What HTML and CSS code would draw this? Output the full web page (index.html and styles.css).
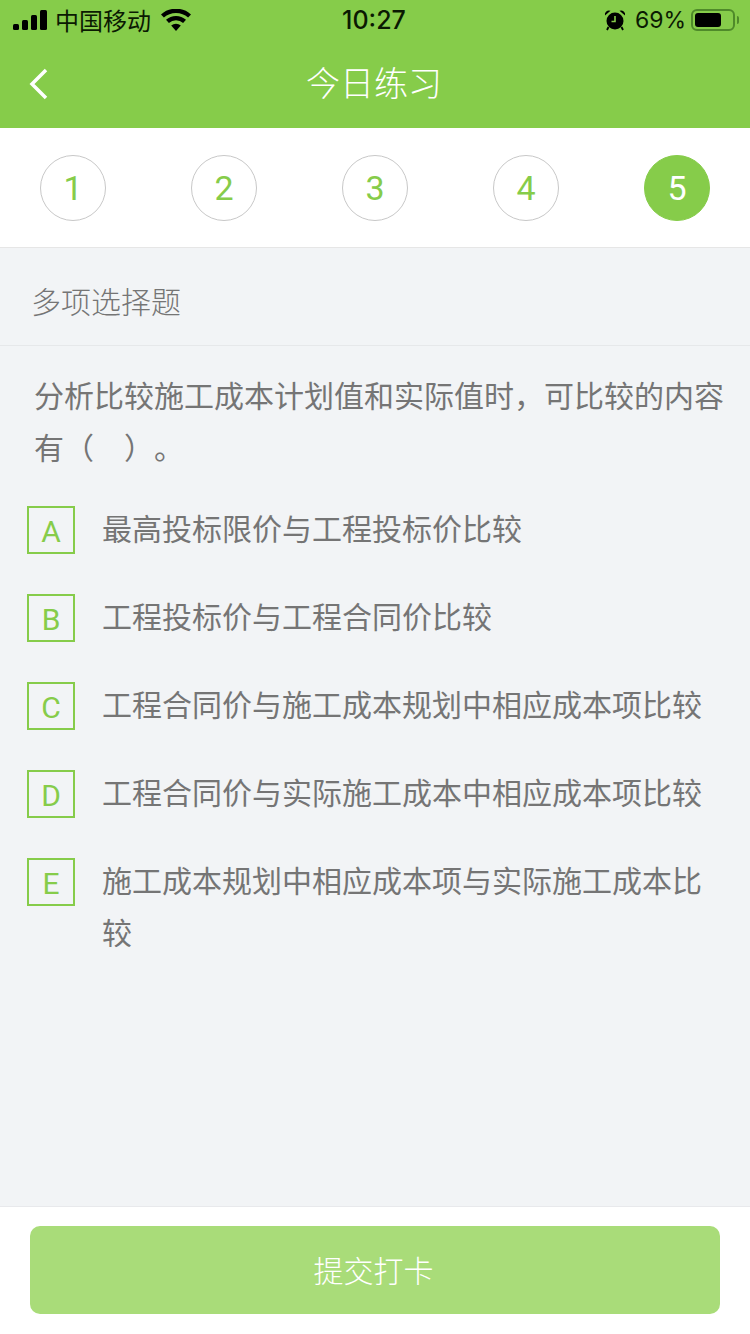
FILE: index.html
```html
<!DOCTYPE html>
<html lang="zh-CN">
<head>
    <meta charset="UTF-8">
    <meta name="viewport" content="width=device-width, initial-scale=1.0">
    <title>今日练习</title>
    <link rel="stylesheet" href="styles.css">
</head>
<body>

    <header class="top">
        <div class="status">
            <div class="status-left">
                <svg class="signal" width="34" height="20" viewBox="0 0 34 20">
                    <rect x="0" y="14" width="6" height="6" rx="1.5"/>
                    <rect x="9" y="10" width="6" height="10" rx="1.5"/>
                    <rect x="18" y="5" width="6" height="15" rx="1.5"/>
                    <rect x="27" y="0" width="7" height="20" rx="1.5"/>
                </svg>
                <span class="carrier">中国移动</span>
                <svg class="wifi" width="30" height="22" viewBox="0 0 30 22">
                    <path d="M15 22 10.2 16.6a7 7 0 0 1 9.600 0Z"/>
                    <path d="M7.900 14 5 10.800a15 15 0 0 1 20 0L22.100 14a10.600 10.600 0 0 0-14.200 0Z"/>
                    <path d="M2.900 8.500 0 5.400a22.500 22.500 0 0 1 30 0L27.100 8.500a18.200 18.200 0 0 0-24.200 0Z"/>
                </svg>
            </div>
            <span class="clock">10:27</span>
            <div class="status-right">
                <svg class="alarm" width="22" height="22" viewBox="0 0 22 22">
                    <circle cx="11" cy="12" r="8.500"/>
                    <path d="M1 6.500A4 4 0 0 1 6.500 1.800ZM21 6.500A4 4 0 0 0 15.500 1.800Z"/>
                    <path d="M4.500 18 3 21M17.500 18 19 21" stroke="#000" stroke-width="1.800"/>
                    <path d="M11 7v5.500H7.500" fill="none" stroke="#86cc4a" stroke-width="1.600"/>
                </svg>
                <span class="percent">69%</span>
                <div class="battery"><div class="battery-level" style="width: 69%"></div></div>
                <div class="battery-cap"></div>
            </div>
        </div>
        <div class="nav">
            <svg class="back" width="20" height="32" viewBox="0 0 20 32">
                <path d="M17 2 3 16l14 14" fill="none" stroke="#fff" stroke-width="3.500"/>
            </svg>
            <h1>今日练习</h1>
        </div>
    </header>

    <div class="steps">
        <div class="step">1</div>
        <div class="step">2</div>
        <div class="step">3</div>
        <div class="step">4</div>
        <div class="step active">5</div>
    </div>

    <main class="content">
        <div class="kind">多项选择题</div>
        <p class="question">分析比较施工成本计划值和实际值时，可比较的内容有（　）。</p>
        <div class="options">
            <div class="option"><span class="letter">A</span><span class="option-text">最高投标限价与工程投标价比较</span></div>
            <div class="option"><span class="letter">B</span><span class="option-text">工程投标价与工程合同价比较</span></div>
            <div class="option"><span class="letter">C</span><span class="option-text">工程合同价与施工成本规划中相应成本项比较</span></div>
            <div class="option"><span class="letter">D</span><span class="option-text">工程合同价与实际施工成本中相应成本项比较</span></div>
            <div class="option"><span class="letter">E</span><span class="option-text">施工成本规划中相应成本项与实际施工成本比较</span></div>
        </div>
    </main>

    <footer class="bottom">
        <button class="submit" type="button">提交打卡</button>
    </footer>

</body>
</html>
```

FILE: styles.css
```css
* {
    box-sizing: border-box;
}

body {
    font-family: "Noto Sans CJK SC", "Noto Sans", sans-serif;
    background-color: #f2f4f6;
    color: #757575;
    margin: 0;
    height: 1334px;
    display: flex;
    flex-direction: column;
    overflow: hidden;
}

.top {
    background-color: #86cc4a;
    height: 128px;
    flex-shrink: 0;
}

.status {
    height: 40px;
    padding: 0 11px 0 13px;
    display: flex;
    align-items: center;
    justify-content: space-between;
    color: #0b1a02;
    position: relative;
}

.status-left,
.status-right {
    display: flex;
    align-items: center;
}

.signal {
    margin-right: 8px;
}

.carrier {
    font-size: 24px;
    line-height: 40px;
}

.wifi {
    margin-left: 10px;
}

.clock {
    font-family: "Inter", "Liberation Sans", sans-serif;
    font-size: 25px;
    font-weight: 500;
    position: absolute;
    left: 0;
    right: 2px;
    text-align: center;
}

.alarm {
    margin-right: 9px;
}

.percent {
    font-family: "Inter", "Liberation Sans", sans-serif;
    font-size: 23px;
    margin-right: 5px;
}

.battery {
    width: 44px;
    height: 22px;
    border: 2px solid #4f8a2a;
    border-radius: 6px;
    padding: 2px;
}

.battery-level {
    height: 100%;
    min-width: 26px;
    background-color: #000;
    border-radius: 3px;
}

.battery-cap {
    width: 2px;
    height: 8px;
    margin-left: 2px;
    background-color: #4f8a2a;
    border-radius: 0 2px 2px 0;
}

.nav {
    height: 88px;
    position: relative;
    display: flex;
    align-items: center;
    justify-content: center;
    padding: 0 2px 5px 0;
}

.nav h1 {
    color: #fff;
    font-size: 34px;
    font-weight: 300;
    margin: 0;
}

.back {
    position: absolute;
    left: 29px;
    top: 28px;
}

.steps {
    background-color: #fff;
    height: 120px;
    flex-shrink: 0;
    padding: 27px 40px 0;
    display: flex;
    justify-content: space-between;
    align-items: flex-start;
    border-bottom: 1px solid #e6e6e6;
}

.step {
    width: 66px;
    height: 66px;
    border: 1px solid #c8c8c8;
    border-radius: 50%;
    color: #86cc4a;
    font-family: "Roboto", sans-serif;
    font-size: 34px;
    display: flex;
    align-items: center;
    justify-content: center;
}

.step.active {
    background-color: #86cc4a;
    border-color: #86cc4a;
    color: #fff;
}

.content {
    flex: 1;
}

.kind {
    height: 98px;
    padding: 6px 31px 0;
    font-size: 30px;
    font-weight: 300;
    display: flex;
    align-items: center;
    color: #757575;
    border-bottom: 1px solid #e6e8ea;
}

.question {
    font-size: 30px;
    line-height: 52px;
    margin: 22px 0 0;
    padding: 0 25px 0 34px;
    text-spacing-trim: space-all;
}

.options {
    margin-top: 34px;
    padding-left: 27px;
    padding-right: 47px;
}

.option {
    display: flex;
    align-items: flex-start;
    margin-bottom: 40px;
}

.letter {
    width: 48px;
    height: 48px;
    flex-shrink: 0;
    border: 2px solid #86cc4a;
    color: #86cc4a;
    font-family: "Roboto", sans-serif;
    font-size: 30px;
    padding-top: 2px;
    display: flex;
    align-items: center;
    justify-content: center;
}

.option-text {
    font-size: 30px;
    line-height: 52px;
    margin-left: 27px;
    margin-top: -5px;
}

.bottom {
    background-color: #fff;
    height: 128px;
    flex-shrink: 0;
    padding: 19px 30px 0;
    border-top: 1px solid #e8e9ec;
}

.submit {
    width: 100%;
    height: 88px;
    border: none;
    border-radius: 10px;
    background-color: #a9dc79;
    color: #fff;
    font-family: inherit;
    font-size: 30px;
    font-weight: 300;
    padding: 0 3px 3px 0;
}
```
